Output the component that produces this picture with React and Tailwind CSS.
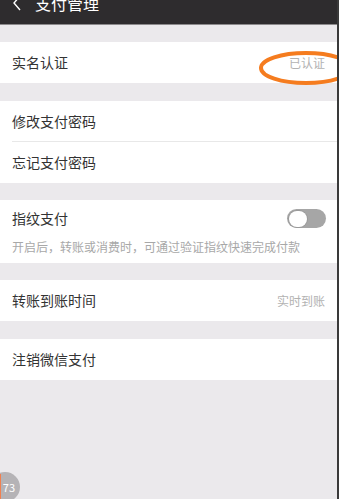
import React from 'react';

const Row = ({ label, value, divider }) => (
  <div className="relative flex h-[41px] items-center justify-between bg-white pl-3 pr-[14px]">
    <span className="text-[14px] text-[#333333]">{label}</span>
    {value && <span className="text-[12px] text-[#b2b2b2]">{value}</span>}
    {divider && <div className="absolute bottom-0 left-3 right-0 h-px bg-[#e8e8e8]" />}
  </div>
);

const App = () => {
  return (
    <div
      className="relative h-[499px] w-[339px] overflow-hidden bg-[#ebe9ec]"
      style={{ fontFamily: '"Noto Sans CJK SC", "Noto Sans", sans-serif' }}
    >
      {/* top bar, cut off at the top */}
      <div className="flex h-6 items-start overflow-hidden bg-[#2e2c2e]">
        <div className="-mt-[9px] flex items-center gap-[13px] pl-[12px] text-[16px] leading-[24px] text-white">
          <svg width="10" height="16" viewBox="0 0 10 16" fill="none">
            <path d="M8 1 L2 8 L8 15" stroke="#ffffff" strokeWidth="1.4" />
          </svg>
          <span>支付管理</span>
        </div>
      </div>
      <div className="h-px bg-[#8c8a8c]" />

      <div className="pt-[17px]">
        <Row label="实名认证" value="已认证" />
      </div>

      <div className="pt-[18px]">
        <Row label="修改支付密码" divider />
        <Row label="忘记支付密码" />
      </div>

      <div className="pt-[17px]">
        <div className="bg-white pl-3 pr-[13px]">
          <div className="flex h-[35px] items-center justify-between pt-[2px]">
            <span className="text-[14px] text-[#333333]">指纹支付</span>
            <div className="flex h-[19px] w-[39px] items-center rounded-full bg-[#a6a6a6] p-[1.5px]">
              <div className="h-[16px] w-[18px] rounded-full bg-white shadow-[0_0_0_1px_#9a9a9a]" />
            </div>
          </div>
          <div className="flex h-[28px] items-start pt-[3px] text-[12px] text-[#a8a8a8]">
            开启后，转账或消费时，可通过验证指纹快速完成付款
          </div>
        </div>
      </div>

      <div className="pt-[17px]">
        <Row label="转账到账时间" value="实时到账" />
      </div>

      <div className="pt-[18px]">
        <Row label="注销微信支付" />
      </div>

      {/* hand-drawn orange mark */}
      <svg className="absolute left-[256px] top-[48px]" width="100" height="40" viewBox="0 0 100 40" fill="none">
        <ellipse cx="50" cy="20" rx="45" ry="15" stroke="#f57c1f" strokeWidth="4" />
      </svg>

      {/* right edge strip */}
      <div className="absolute right-0 top-0 h-full w-[2px] bg-[#3a3a3a]" />

      {/* floating badge */}
      <div className="absolute -left-[10px] top-[472px] flex h-[30px] w-[30px] items-center justify-end rounded-full bg-[#b5b3b6] pr-[5px] text-[11px] text-white">
        73
      </div>
      <div className="absolute left-0 top-[474px] h-[25px] w-px bg-[#f08050]" />
    </div>
  );
};

export default App;
